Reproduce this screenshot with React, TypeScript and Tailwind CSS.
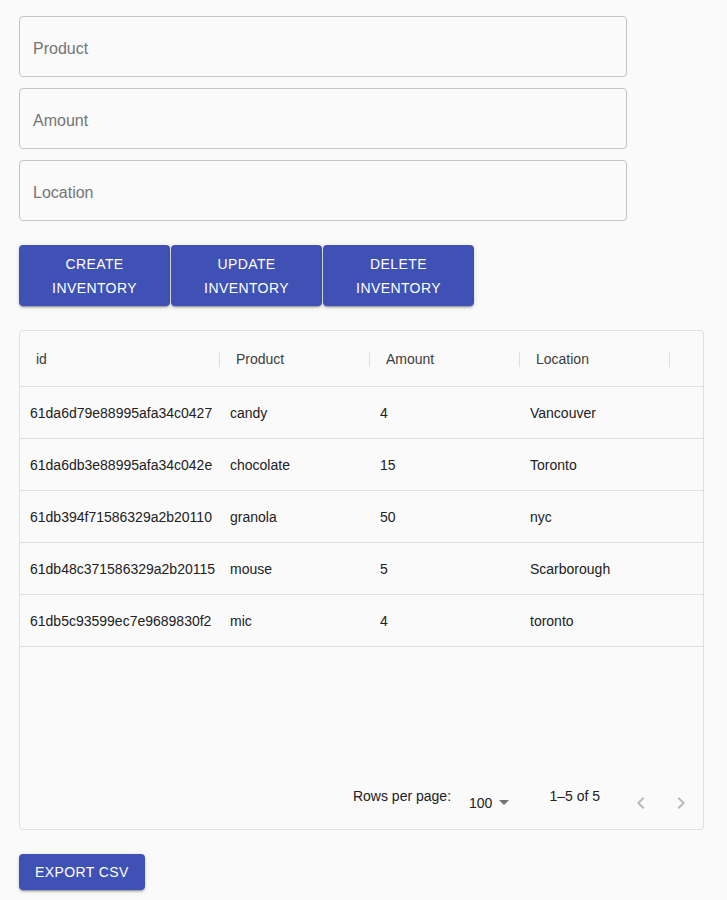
const rows = [
  { id: "61da6d79e88995afa34c0427", product: "candy", amount: "4", location: "Vancouver" },
  { id: "61da6db3e88995afa34c042e", product: "chocolate", amount: "15", location: "Toronto" },
  { id: "61db394f71586329a2b20110", product: "granola", amount: "50", location: "nyc" },
  { id: "61db48c371586329a2b20115", product: "mouse", amount: "5", location: "Scarborough" },
  { id: "61db5c93599ec7e9689830f2", product: "mic", amount: "4", location: "toronto" },
];

const columns = [
  { label: "id", width: "w-[200px]" },
  { label: "Product", width: "w-[150px]" },
  { label: "Amount", width: "w-[150px]" },
  { label: "Location", width: "w-[150px]" },
];

const btnShadow =
  "shadow-[0px_3px_1px_-2px_rgba(0,0,0,0.2),0px_2px_2px_0px_rgba(0,0,0,0.14),0px_1px_5px_0px_rgba(0,0,0,0.12)]";

function Field({ label }: { label: string }) {
  return (
    <div className="w-[608px] h-[61px] border border-[#c4c4c4] rounded-[4px] flex items-center px-[13px] pt-[5px]">
      <span className="text-[16px] text-[#757575]">{label}</span>
    </div>
  );
}

function ActionButton({ top, bottom }: { top: string; bottom: string }) {
  return (
    <button
      className={`w-[151px] h-[61px] bg-[#3f51b5] text-white rounded-[4px] text-[14px] leading-[24px] tracking-[0.4px] uppercase flex flex-col items-center justify-center ${btnShadow}`}
    >
      <span>{top}</span>
      <span>{bottom}</span>
    </button>
  );
}

export default function App() {
  return (
    <div
      className="min-h-screen bg-[#fafafa] pl-[19px] pt-[16px] pb-[10px]"
      style={{ fontFamily: '"Liberation Sans", Arial, sans-serif' }}
    >
      <div className="flex flex-col gap-[11px]">
        <Field label="Product" />
        <Field label="Amount" />
        <Field label="Location" />
      </div>

      <div className="flex gap-[1px] mt-[24px]">
        <ActionButton top="Create" bottom="Inventory" />
        <ActionButton top="Update" bottom="Inventory" />
        <ActionButton top="Delete" bottom="Inventory" />
      </div>

      <div className="mt-[24px] w-[685px] h-[500px] border border-[#e0e0e0] rounded-[4px] flex flex-col text-[14px] text-[#212121]">
        <div className="flex h-[56px] border-b border-[#e0e0e0] shrink-0 pt-[2px]">
          {columns.map((c) => (
            <div key={c.label} className={`${c.width} flex items-center justify-between pl-[16px]`}>
              <span className="text-[#3d3d3d]">{c.label}</span>
              <span className="w-px h-[15px] bg-[#e0e0e0]" />
            </div>
          ))}
        </div>

        {rows.map((r) => (
          <div key={r.id} className="flex h-[52px] border-b border-[#e0e0e0] shrink-0 items-center pt-[2px]">
            <div className="w-[200px] pl-[10px] whitespace-nowrap">{r.id}</div>
            <div className="w-[150px] pl-[10px]">{r.product}</div>
            <div className="w-[150px] pl-[10px]">{r.amount}</div>
            <div className="w-[150px] pl-[10px]">{r.location}</div>
          </div>
        ))}

        <div className="flex-1" />

        <div className="h-[52px] flex justify-end items-start pr-[10px] text-[14px] text-[#212121]">
          <span className="mt-[9px] leading-[20px]">Rows per page:</span>
          <div className="ml-[18px] mt-[13px] flex items-center">
            <span className="leading-[20px] mt-[2px]">100</span>
            <svg width="24" height="24" viewBox="0 0 24 24" className="fill-[rgba(0,0,0,0.54)]">
              <path d="M7 10l5 5 5-5z" />
            </svg>
          </div>
          <span className="ml-[33px] mt-[9px] leading-[20px]">1–5 of 5</span>
          <svg width="24" height="24" viewBox="0 0 24 24" className="ml-[29px] mt-[14px] fill-[rgba(0,0,0,0.26)]">
            <path d="M15.41 7.41L14 6l-6 6 6 6 1.41-1.41L10.83 12z" />
          </svg>
          <svg width="24" height="24" viewBox="0 0 24 24" className="ml-[16px] mt-[14px] fill-[rgba(0,0,0,0.26)]">
            <path d="M10 6L8.59 7.41 13.17 12l-4.58 4.59L10 18l6-6z" />
          </svg>
        </div>
      </div>

      <button
        className={`mt-[24px] h-[36px] px-[16px] bg-[#3f51b5] text-white rounded-[4px] text-[14px] tracking-[0.4px] uppercase ${btnShadow}`}
      >
        Export CSV
      </button>
    </div>
  );
}
